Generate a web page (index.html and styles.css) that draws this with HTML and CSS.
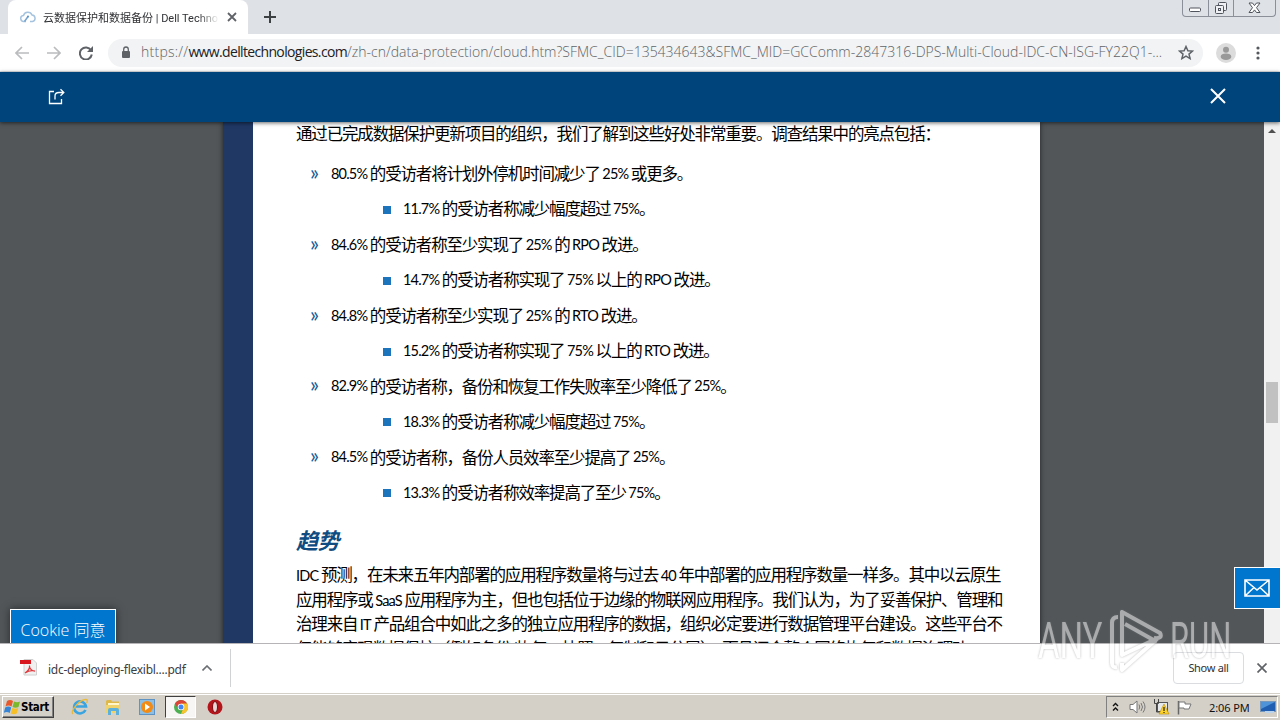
FILE: index.html
```html
<!DOCTYPE html>
<html lang="zh-CN">
<head>
  <meta charset="utf-8">
  <meta name="viewport" content="width=device-width, initial-scale=1">
  <title>云数据保护和数据备份 | Dell Technologies</title>
  <link rel="stylesheet" href="styles.css">
</head>
<body>
  <div class="desktop">

    <div class="tabs">
      <div class="tab">
        <svg class="favicon" width="16" height="14" viewBox="0 0 16 14" fill="none" stroke="#a5c3df" stroke-width="1.5"><path d="M6 11.500H4a3 3 0 0 1-.5-6A4.500 4.500 0 0 1 12 5a3.300 3.300 0 0 1 .5 6.500H10"/><path d="M4.500 11.500 8 6.500" stroke="#74a3cf"/><circle cx="8" cy="6.500" r="1" fill="#5792c6" stroke="none"/></svg>
        <span class="tab-title">云数据保护和数据备份 | Dell Techno</span>
        <svg width="10" height="10" viewBox="0 0 10 10" stroke="#5f6368" stroke-width="1.8"><path d="M1 1l8 8M9 1L1 9"/></svg>
      </div>
      <svg class="new-tab" width="12" height="12" viewBox="0 0 12 12" stroke="#3c4043" stroke-width="2"><path d="M6 0v12M0 6h12"/></svg>
      <div class="window-buttons">
        <span class="min"><svg width="13" height="6" viewBox="0 0 13 6"><rect x=".5" y="1" width="11" height="3.500" rx="1" fill="#fff" stroke="#50545c"/></svg></span>
        <span class="max"><svg width="14" height="14" viewBox="0 0 14 14" fill="#eef0f4" stroke="#50545c"><rect x="4.500" y="1.500" width="8" height="8" rx="1"/><rect x="1.500" y="4.500" width="8" height="8" rx="1"/><rect x="4.500" y="7.500" width="2" height="2"/></svg></span>
        <span class="shut"><svg width="13" height="12" viewBox="0 0 13 12"><path d="M1 1h3.500l2 2.600L8.500 1H12L8.500 5.700 12 10.500H8.500l-2-2.600-2 2.600H1l3.500-4.800z" fill="#fff" stroke="#50545c"/></svg></span>
      </div>
    </div>

    <div class="toolbar">
      <svg class="back" width="14" height="14" viewBox="0 0 14 14" fill="none" stroke="#babcbe" stroke-width="1.7"><path d="M14 7H1M7 1L1 7l6 6"/></svg>
      <svg class="forward" width="14" height="14" viewBox="0 0 14 14" fill="none" stroke="#babcbe" stroke-width="1.7"><path d="M0 7h13M7 1l6 6-6 6"/></svg>
      <svg class="reload" width="14" height="14" viewBox="0 0 14 14"><path d="M12 4.300A6 6 0 1 0 12.800 8.500" fill="none" stroke="#5f6368" stroke-width="2"/><path d="M14 0v6H8z" fill="#5f6368"/></svg>
      <div class="address">
        <svg width="10" height="13" viewBox="0 0 10 13"><rect x="1" y="5" width="8" height="7" rx="1" fill="#5f6368"/><path d="M2.700 5.500V3.300a2.300 2.300 0 0 1 4.600 0v2.200" fill="none" stroke="#5f6368" stroke-width="1.300"/></svg>
        <span class="url"><span class="scheme">https://</span><span class="host">www.delltechnologies.com</span><span class="path">/zh-cn/data-protection/cloud.htm?SFMC_CID=135434643&amp;SFMC_MID=GCComm-2847316-DPS-Multi-Cloud-IDC-CN-ISG-FY22Q1-...</span></span>
        <svg class="star" width="16" height="15" viewBox="0 0 16 15"><path d="M8 1.500l1.900 4.200 4.600.4-3.500 3 1.100 4.500L8 11.200l-4.100 2.400L5 9.100l-3.500-3 4.600-.4z" fill="none" stroke="#5f6368" stroke-width="1.500"/></svg>
      </div>
      <svg class="profile" width="20" height="20" viewBox="0 0 20 20"><circle cx="10" cy="10" r="10" fill="#dcdcdc"/><circle cx="10" cy="6.800" r="3" fill="#999"/><ellipse cx="10" cy="13.700" rx="5.300" ry="3.300" fill="#999"/></svg>
      <svg class="more" width="4" height="14" viewBox="0 0 4 14" fill="#55595e"><circle cx="2" cy="2" r="1.600"/><circle cx="2" cy="7" r="1.600"/><circle cx="2" cy="12" r="1.600"/></svg>
    </div>

    <div class="viewer-bar">
      <svg width="17" height="17" viewBox="0 0 17 17" fill="none" stroke="#fff" stroke-width="1.300"><path d="M6 3.500H1.500v12h12V11"/><path d="M7 11.500V8q0-3.500 4-3.500h4.500M12.500 1.300l3.300 3.200-3.300 3.200"/></svg>
      <svg width="16" height="16" viewBox="0 0 16 16" stroke="#fff" stroke-width="2"><path d="M1 1l14 14M15 1L1 15"/></svg>
    </div>

    <div class="viewer">
      <div class="page">
        <p class="intro">通过已完成数据保护更新项目的组织，我们了解到这些好处非常重要。调查结果中的亮点包括：</p>
        <ul class="findings">
          <li><b>80.5%</b> 的受访者将计划外停机时间减少了 <b>25%</b> 或更多。</li>
          <li class="sub"><b>11.7%</b> 的受访者称减少幅度超过 <b>75%</b>。</li>
          <li><b>84.6%</b> 的受访者称至少实现了 <b>25%</b> 的 <b>RPO</b> 改进。</li>
          <li class="sub"><b>14.7%</b> 的受访者称实现了 <b>75%</b> 以上的 <b>RPO</b> 改进。</li>
          <li><b>84.8%</b> 的受访者称至少实现了 <b>25%</b> 的 <b>RTO</b> 改进。</li>
          <li class="sub"><b>15.2%</b> 的受访者称实现了 <b>75%</b> 以上的 <b>RTO</b> 改进。</li>
          <li><b>82.9%</b> 的受访者称，备份和恢复工作失败率至少降低了 <b>25%</b>。</li>
          <li class="sub"><b>18.3%</b> 的受访者称减少幅度超过 <b>75%</b>。</li>
          <li><b>84.5%</b> 的受访者称，备份人员效率至少提高了 <b>25%</b>。</li>
          <li class="sub"><b>13.3%</b> 的受访者称效率提高了至少 <b>75%</b>。</li>
        </ul>
        <h2>趋势</h2>
        <p class="body"><b>IDC</b> 预测，在未来五年内部署的应用程序数量将与过去 <b>40</b> 年中部署的应用程序数量一样多。其中以云原生<br>应用程序或 <b>SaaS</b> 应用程序为主，但也包括位于边缘的物联网应用程序。我们认为，为了妥善保护、管理和<br>治理来自 <b>IT</b> 产品组合中如此之多的独立应用程序的数据，组织必定要进行数据管理平台建设。这些平台不<br>仅能够实现数据保护（例如备份/恢复、快照、复制和云分层），而且还会整个网络恢复和数据治理功</p>
      </div>
      <div class="scrollbar">
        <i class="arrow"></i>
        <i class="thumb"></i>
      </div>
      <div class="cookie">Cookie 同意</div>
      <div class="mail">
        <svg width="26" height="18" viewBox="0 0 26 18" fill="none" stroke="#fff" stroke-width="1.600"><path d="M1 1h24v16H1zM1 1l12 10L25 1M1 17l9-8.500M25 17l-9-8.500"/></svg>
      </div>
    </div>

    <div class="downloads">
      <div class="item">
        <svg width="17" height="17" viewBox="0 0 17 17"><path d="M4 .5h9l3.500 3.500v12H4z" fill="#f1f1f1" stroke="#d0d0d0"/><path d="M0 1h11v4H0z" fill="#d8171e"/><path d="M5 14c3-2 5-5 4.500-7.500C9 9 12 12.500 15 12c-3-1-7 0-10 2z" fill="none" stroke="#e0393e" stroke-width="1.200"/></svg>
        <span>idc-deploying-flexibl....pdf</span>
        <svg class="caret" width="10" height="6" viewBox="0 0 10 6" fill="none" stroke="#6b6f73" stroke-width="1.600"><path d="M.5 5.500L5 1l4.500 4.500"/></svg>
      </div>
      <div class="show-all">Show all</div>
      <svg class="dismiss" width="10" height="10" viewBox="0 0 10 10" stroke="#5f6368" stroke-width="1.700"><path d="M.5.5l9 9M9.500.5l-9 9"/></svg>
    </div>

    <div class="taskbar">
      <div class="start">
        <svg width="17" height="16" viewBox="0 0 17 16"><path d="M3 2q3-2 6 0L7.500 7.500q-3-2-6 0z" fill="#e8582c"/><path d="M10 2.500q3 1.500 6 0L14.500 8q-3 1.500-6 0z" fill="#7bb82c"/><path d="M1.200 8.500q3-2 6 0L5.700 14q-3-2-6 0z" fill="#3584d5"/><path d="M8.200 9q3 1.500 6 0L12.700 14.500q-3 1.500-6 0z" fill="#f6bf26"/></svg>
        <span>Start</span>
      </div>
      <svg class="ie" width="18" height="18" viewBox="0 0 18 18" fill="none"><path d="M14.500 12A6 6 0 1 1 15 8.500H5" stroke="#3aa4e0" stroke-width="2.600"/><path d="M2 16C-1 13 9 1 15 1.500c2 .2 1.500 2 .5 3.500" stroke="#e8b93c" stroke-width="1.300"/></svg>
      <svg class="folder" width="17" height="18" viewBox="0 0 17 18"><path d="M1 3l1-1h4l1 1.500h7V15H1z" fill="#dfb84a"/><path d="M3 5h11v4H3z" fill="#fff6cc"/><path d="M1 7h14v8H1z" fill="#f0d36c"/><path d="M3 17v-5q0-2 2-2h7q2 0 2 2v5h-3v-4H6v4z" fill="#5cb0dc"/></svg>
      <svg class="media" width="16" height="16" viewBox="0 0 16 16"><rect x=".5" y=".5" width="15" height="15" fill="#8dbfe5" stroke="#5f93c3"/><circle cx="8" cy="8" r="6" fill="#f28a16"/><path d="M6 4.500v7l5-3.500z" fill="#fff"/></svg>
      <div class="running">
        <svg width="14" height="14" viewBox="0 0 14 14"><circle cx="7" cy="7" r="7" fill="#4caf50"/><path d="M1 3.500A7 7 0 0 1 13 3.500L7 7z" fill="#db4437"/><path d="M13.100 3.500A7 7 0 0 1 7 14l2.500-6.500L7 3.500z" fill="#f9c42d"/><path d="M1 3.500L4 9l3-5.500z" fill="#db4437"/><circle cx="7" cy="7" r="3.300" fill="#fff"/><circle cx="7" cy="7" r="2.500" fill="#4285f4"/></svg>
      </div>
      <svg class="opera" width="16" height="16" viewBox="0 0 16 16"><circle cx="8" cy="8" r="7.500" fill="#b3151b"/><ellipse cx="8" cy="8" rx="2.500" ry="5.500" fill="#e8d8d5" stroke="#7d0b10"/></svg>
      <div class="tray">
        <svg class="chevrons" width="7" height="10" viewBox="0 0 7 10" fill="none" stroke="#111" stroke-width="1.400"><path d="M1 4l2.500-2.500L6 4M1 8.500L3.500 6 6 8.500"/></svg>
        <svg class="volume" width="17" height="14" viewBox="0 0 17 14" fill="none" stroke="#777"><path d="M1 4.500h3L8 1v12L4 9.500H1z" fill="#fff"/><path d="M10 4.500q1.500 2.500 0 5M12 3q3 4 0 8M14 1.500q4 5.500 0 11"/></svg>
        <svg class="network" width="17" height="16" viewBox="0 0 17 16"><rect x="4.500" y="3.500" width="10" height="9" fill="#e6e9ec" stroke="#555"/><path d="M1.500 0v4.500h4V0M3.500 5v8H7" fill="none" stroke="#444"/><path d="M11 5l5 10H6z" fill="#ffd42a" stroke="#b98a00" stroke-width=".6"/><path d="M11 8v4M11 13v1" stroke="#222" stroke-width="1.200"/></svg>
        <svg class="flag" width="17" height="15" viewBox="0 0 17 15"><path d="M2.500 1v13.500" stroke="#666" stroke-width="1.500"/><path d="M3 2h6v2h6l-2 5H8V8H3z" fill="#fff" stroke="#777"/></svg>
        <span class="clock">2:06 PM</span>
        <svg class="show-desktop" width="16" height="13" viewBox="0 0 16 13"><rect x=".5" y=".5" width="15" height="10" fill="#1f5eb0" stroke="#7797bb"/><path d="M1 1h14L1 8z" fill="#4f93d8"/><path d="M5 10h9v2H5z" fill="#b9d3ec"/></svg>
      </div>
    </div>

    <div class="watermark">
      <span class="any">ANY</span>
      <svg width="58" height="64" viewBox="0 0 58 64" fill="none" stroke="#fff" stroke-width="4" stroke-linejoin="round"><path d="M10 8q-6 0-6 6v40q0 5 5 4M46 29q9 1 6-5L14 3v43l36-17L14 61v-7M17 15l32 18"/></svg>
      <span class="run">RUN</span>
    </div>

  </div>
</body>
</html>
```
FILE: styles.css
```css
:root {
  --ui: "Noto Sans", "Noto Sans CJK SC", sans-serif;
  --doc: "Noto Sans CJK SC", sans-serif;
  --grey: #525659;
  --navy: #1f3864;
  --dell: #00447c;
  --blue: #0076ce;
}

* {box-sizing: border-box}

body {
  margin: 0;
  overflow: hidden;
  font: 12px var(--ui);
}

svg {
  display: block;
  flex: none;
}

.desktop {
  position: relative;
  display: flex;
  flex-direction: column;
  width: 1280px;
  height: 720px;
}

/* browser chrome */
.tabs {
  display: flex;
  height: 34px;
  padding-left: 8px;
  background: #dee1e6;
}

.tab {
  display: flex;
  align-items: center;
  width: 240px;
  padding: 0 11px 0 12px;
  background: #fff;
  border-radius: 8px 8px 0 0;
}

.tab-title {
  flex: 1;
  margin: 0 8px 0 7px;
  overflow: hidden;
  white-space: nowrap;
  color: #303134;
  font: 11px Roboto, "Noto Sans CJK SC", sans-serif;
  -webkit-mask-image: linear-gradient(90deg, #000 88%, transparent);
  mask-image: linear-gradient(90deg, #000 88%, transparent);
}

.new-tab {margin: 11px 0 0 16px}

.window-buttons {
  display: flex;
  height: 17px;
  margin: 0 4px 0 auto;
  border: 1px solid #8b8f98;
  border-top: 0;
  border-radius: 0 0 4px 4px;
}

.window-buttons span {
  display: flex;
  align-items: center;
  justify-content: center;
  width: 25px;
}

.window-buttons span + span {border-left: 1px solid #8b8f98}
.window-buttons .min {padding-top: 4px}
.window-buttons .shut {width: 42px}

.toolbar {
  display: flex;
  align-items: center;
  height: 38px;
  padding: 0 20px 0 15px;
  background: #fff;
  border-bottom: 1px solid #e4e6e8;
}

.forward {margin-left: 18px}
.reload {margin-left: 18px}

.address {
  display: flex;
  align-items: center;
  width: 1095px;
  height: 28px;
  margin-left: 15px;
  padding: 0 9px 0 13px;
  background: #f1f3f4;
  border-radius: 14px;
}

.url {
  flex: 1;
  margin: -2px 0 0 10px;
  white-space: nowrap;
  color: #5f6367;
  font: 300 14px "Open Sans", sans-serif;
}

.scheme {letter-spacing: .25px}

.host {
  color: #202124;
  font-weight: 400;
  letter-spacing: -.65px;
}

.profile {margin-left: 13px}
.more {margin-left: auto}

/* document viewer */
.viewer-bar {
  position: relative;
  z-index: 1;
  display: flex;
  align-items: center;
  justify-content: space-between;
  height: 50px;
  padding: 0 54px 2px 48px;
  background: var(--dell);
  box-shadow: 0 1px 4px rgba(0, 0, 0, .6);
}

.viewer {
  position: relative;
  display: flex;
  height: 521px;
  padding-left: 223px;
  overflow: hidden;
  background: var(--grey);
}

.page {
  width: 817px;
  height: 540px;
  padding-left: 43px;
  background: #fff;
  border-left: 30px solid var(--navy);
  box-shadow: 0 0 5px rgba(0, 0, 0, .6);
  color: #000;
  font: 16.5px/24.6px var(--doc);
  letter-spacing: -1.17px;
  white-space: nowrap;
}

.page b {
  font: 14.5px Lato, sans-serif;
  letter-spacing: -.8px;
}

.page p {margin: 0}
.page .intro {margin-top: -1px}

.findings {
  margin: 10px 0 0;
  padding: 0;
  list-style: none;
}

.findings li {
  display: flex;
  align-items: center;
  height: 35.44px;
  padding-left: 14px;
  white-space: pre;
}

.findings li::before {
  content: "»";
  width: 21px;
  margin-top: -4px;
  color: #1a5a96;
  font: 21px Lato, sans-serif;
}

.findings .sub {padding-left: 87px}

.findings .sub::before {
  content: "";
  width: 8px;
  height: 8px;
  margin: 2px 12px 0 0;
  background: #1c75bc;
}

.page h2 {
  margin: 16px 0 10px;
  color: #0f4c81;
  font: italic 700 22px/26px var(--doc);
  letter-spacing: -.5px;
}

.scrollbar {
  width: 16px;
  margin-left: auto;
  background: #f1f1f1;
}

.arrow {
  display: block;
  width: 0;
  margin: 7px auto 0;
  border: 4px solid transparent;
  border-top: 0;
  border-bottom: 4px solid #505050;
}

.thumb {
  display: block;
  width: 12px;
  height: 41px;
  margin: 249px auto 0;
  background: #c1c1c1;
}

.cookie {
  position: absolute;
  left: 10px;
  top: 487px;
  width: 106px;
  height: 42px;
  background: var(--blue);
  border: 1px solid #fff;
  box-shadow: 0 0 8px rgba(0, 0, 0, .5);
  color: #fff;
  font: 300 16px/41px "Open Sans", "Noto Sans CJK SC", sans-serif;
  text-align: center;
  white-space: nowrap;
}

.mail {
  position: absolute;
  right: 0;
  top: 445px;
  display: flex;
  align-items: center;
  width: 46px;
  height: 42px;
  padding-left: 9px;
  background: var(--blue);
  border: 1px solid #fff;
  border-right: 0;
}

/* download shelf */
.downloads {
  display: flex;
  align-items: center;
  height: 50px;
  padding: 0 13px 2px 0;
  background: #fff;
  border-top: 1px solid #b6b4b6;
}

.item {
  display: flex;
  align-items: center;
  width: 231px;
  height: 38px;
  padding-left: 20px;
  border-right: 1px solid #d0d2d4;
  color: #3c4043;
}

.item span {
  width: 143px;
  margin: 3px 11px 0;
  font-size: 12px;
  letter-spacing: -.27px;
  white-space: nowrap;
}

.show-all {
  width: 71px;
  height: 32px;
  margin: 0 13px 0 auto;
  border: 1px solid #dadce0;
  border-radius: 4px;
  color: #303134;
  font-size: 11px;
  line-height: 29px;
  letter-spacing: -.3px;
  text-align: center;
}

/* windows taskbar */
.taskbar {
  display: flex;
  align-items: center;
  height: 27px;
  padding: 1px 2px 0;
  background: #d4d0c8;
  box-shadow: inset 0 1px #d4d0c8, inset 0 2px #fff;
}

.start {
  display: flex;
  align-items: center;
  width: 52px;
  height: 22px;
  padding-left: 1px;
  border: 1px solid;
  border-color: #fff #404040 #404040 #fff;
  box-shadow: inset -1px -1px #808080;
  color: #000;
  font: bold 11.5px "DejaVu Sans Condensed", "DejaVu Sans", sans-serif;
  letter-spacing: -.3px;
}

.ie {margin-left: 17px}
.folder {margin-left: 16px}
.media {margin-left: 17px}

.running {
  display: flex;
  align-items: center;
  justify-content: center;
  width: 31px;
  height: 22px;
  margin-left: 10px;
  background: #f7f6f4;
  border: 1px solid;
  border-color: #404040 #fff #fff #404040;
}

.opera {margin-left: 11px}

.tray {
  display: flex;
  align-items: center;
  width: 172px;
  height: 22px;
  margin-left: auto;
  padding-left: 5px;
  border: 1px solid;
  border-color: #808080 #fff #fff #808080;
}

.volume {margin-left: 10px}
.network {margin-left: 7px}
.flag {margin-left: 6px}

.clock {
  width: 40px;
  margin-left: 16px;
  color: #111;
  font-size: 11px;
  letter-spacing: -.1px;
  white-space: nowrap;
}

.show-desktop {margin-left: 11px}

.watermark {
  position: absolute;
  left: 1038px;
  top: 608px;
  display: flex;
  align-items: center;
  width: 194px;
  height: 66px;
  color: #fff;
  font: 50px/66px Roboto, sans-serif;
  filter: drop-shadow(0 0 1px #777);
  opacity: .5;
  pointer-events: none;
}

.watermark svg {margin: 0 4px 0 6px}

.watermark span {
  width: 64px;
  transform: scaleX(.66);
  transform-origin: left;
}

.watermark .run {
  width: 60px;
  transform: scaleX(.62);
}
```
